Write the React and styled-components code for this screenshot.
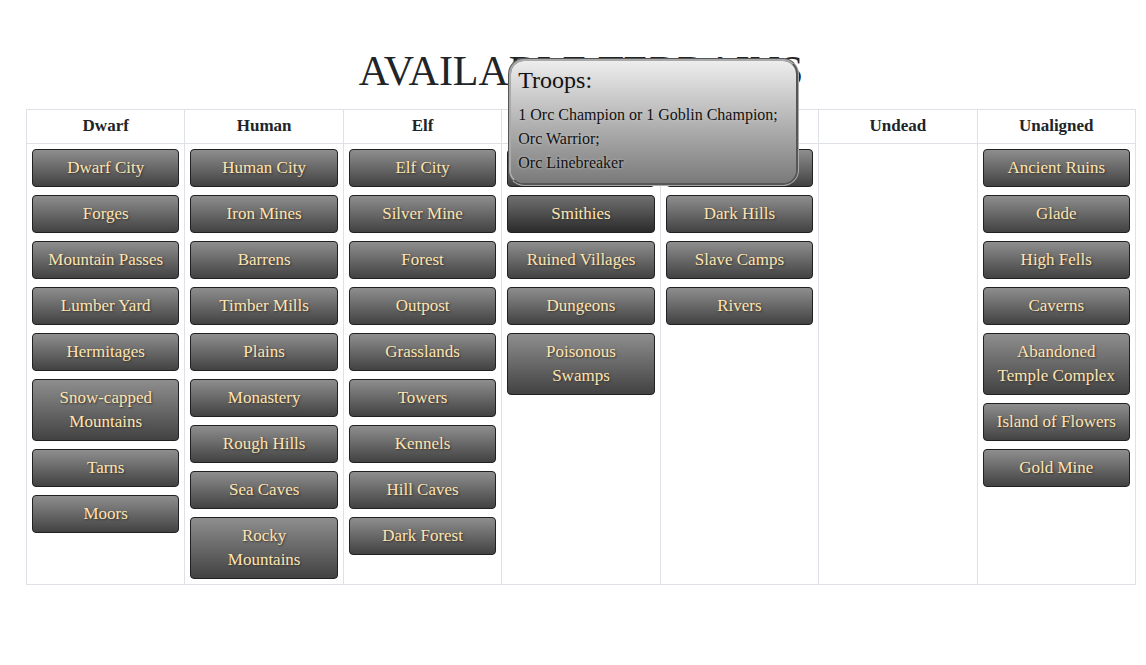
import React from "react";
import styled, { createGlobalStyle } from "styled-components";

const GlobalStyle = createGlobalStyle`
  *, *::before, *::after { box-sizing: border-box; }
  body {
    margin: 0;
    background: #fff;
    color: #212529;
    font-family: "Liberation Serif", "Times New Roman", serif;
    font-size: 17px;
    line-height: 24px;
  }
`;

const Page = styled.main`
  padding: 48px 10px 80px 26px;
`;

const Title = styled.h1`
  margin: 0 0 15px;
  font-size: 42px;
  line-height: 46px;
  font-weight: 400;
  text-align: center;
  text-transform: uppercase;
`;

const TerrainTable = styled.table`
  width: 100%;
  table-layout: fixed;
  border-collapse: collapse;
`;

const FactionHeading = styled.th`
  padding: 4px 5px 5px;
  border: 1px solid #dee2e6;
  font-weight: 700;
  text-align: center;
`;

const FactionCell = styled.td`
  padding: 5px;
  border: 1px solid #dee2e6;
  vertical-align: top;
`;

const TerrainList = styled.ul`
  display: flex;
  flex-direction: column;
  gap: 8px;
  margin: 0;
  padding: 0;
  list-style: none;
`;

const TerrainItem = styled.li`
  position: relative;
`;

const TerrainButton = styled.button`
  display: block;
  width: 100%;
  padding: 6px 8px;
  border: 1px solid #212121;
  border-radius: 4px;
  background: ${({ $active }) =>
    $active
      ? "linear-gradient(#707070, #2b2b2b)"
      : "linear-gradient(#8e8e8e, #424242)"};
  color: #ffe4b0;
  font: inherit;
  text-align: center;
  text-shadow: 1px 1px 2px #333;
  white-space: pre-line;
  cursor: pointer;
`;

const Tooltip = styled.div`
  position: absolute;
  z-index: 1;
  left: 1px;
  bottom: calc(100% + 9px);
  width: max-content;
  padding: 5px 18px 8px 7px;
  border: 3px groove #aaa;
  border-radius: 16px;
  background: linear-gradient(#f0f0f0, #777) border-box;
  color: #111;
  font-size: 16px;
  text-shadow: 0 0 3px #ccc;
`;

const TooltipTitle = styled.h2`
  margin: 0 0 8px;
  font-size: 24px;
  line-height: 29px;
  font-weight: 400;
`;

const TroopList = styled.div`
  display: flex;
  flex-direction: column;
`;

const factions = [
  { name: "Dwarf", terrains: ["Dwarf City", "Forges", "Mountain Passes", "Lumber Yard", "Hermitages", "Snow-capped\nMountains", "Tarns", "Moors"] },
  { name: "Human", terrains: ["Human City", "Iron Mines", "Barrens", "Timber Mills", "Plains", "Monastery", "Rough Hills", "Sea Caves", "Rocky\nMountains"] },
  { name: "Elf", terrains: ["Elf City", "Silver Mine", "Forest", "Outpost", "Grasslands", "Towers", "Kennels", "Hill Caves", "Dark Forest"] },
  { name: "", terrains: ["", "Smithies", "Ruined Villages", "Dungeons", "Poisonous\nSwamps"] },
  { name: "", terrains: ["", "Dark Hills", "Slave Camps", "Rivers"] },
  { name: "Undead", terrains: [] },
  { name: "Unaligned", terrains: ["Ancient Ruins", "Glade", "High Fells", "Caverns", "Abandoned\nTemple Complex", "Island of Flowers", "Gold Mine"] },
];

const troops = {
  Smithies: ["1 Orc Champion or 1 Goblin Champion;", "Orc Warrior;", "Orc Linebreaker"],
};

function Terrain({ name, active }) {
  return (
    <TerrainItem>
      <TerrainButton type="button" $active={active} aria-describedby={active ? "troops" : undefined}>
        {name || "\u00a0"}
      </TerrainButton>
      {active && (
        <Tooltip id="troops" role="tooltip">
          <TooltipTitle>Troops:</TooltipTitle>
          <TroopList>
            {troops[name].map((troop) => (
              <span key={troop}>{troop}</span>
            ))}
          </TroopList>
        </Tooltip>
      )}
    </TerrainItem>
  );
}

export default function App() {
  return (
    <>
      <GlobalStyle />
      <Page>
        <Title>Available Terrains</Title>
        <TerrainTable>
          <thead>
            <tr>
              {factions.map(({ name }, index) => (
                <FactionHeading key={index} scope="col">{name}</FactionHeading>
              ))}
            </tr>
          </thead>
          <tbody>
            <tr>
              {factions.map(({ terrains }, index) => (
                <FactionCell key={index}>
                  <TerrainList>
                    {terrains.map((terrain, row) => (
                      <Terrain key={row} name={terrain} active={terrain === "Smithies"} />
                    ))}
                  </TerrainList>
                </FactionCell>
              ))}
            </tr>
          </tbody>
        </TerrainTable>
      </Page>
    </>
  );
}
